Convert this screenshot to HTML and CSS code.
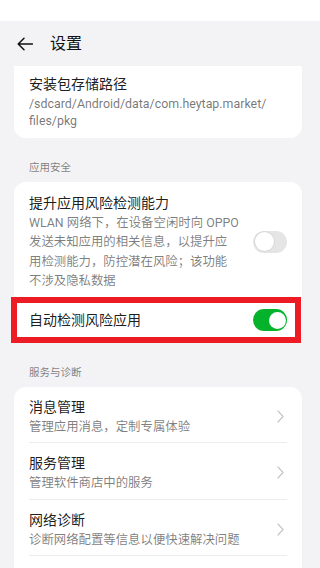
FILE: index.html
```html
<!DOCTYPE html>
<html lang="zh-CN">
<head>
<meta charset="utf-8">
<meta name="viewport" content="width=device-width, initial-scale=1">
<title>设置</title>
<link rel="stylesheet" href="styles.css">
</head>
<body>
<div class="statusbar"></div>
<header class="topbar">
  <svg class="back" width="16" height="14" viewBox="0 0 16 14" aria-hidden="true">
    <path d="M15.5 7H1.2M7 1.2L1.2 7 7 12.8" fill="none" stroke="#111" stroke-width="1.5" stroke-linecap="round" stroke-linejoin="round"/>
  </svg>
  <h1 class="title">设置</h1>
</header>

<main class="content">
  <section class="card card-top">
    <div class="row row-path">
      <div class="row-text">
        <div class="row-title">安装包存储路径</div>
        <div class="row-path-text">/sdcard/Android/data/com.heytap.market/<br>files/pkg</div>
      </div>
    </div>
  </section>

  <div class="section-label">应用安全</div>
  <section class="card">
    <div class="row row-risk">
      <div class="row-text">
        <div class="row-title">提升应用风险检测能力</div>
        <div class="row-desc">WLAN 网络下，在设备空闲时向 OPPO<br>发送未知应用的相关信息，以提升应<br>用检测能力，防控潜在风险；该功能<br>不涉及隐私数据</div>
      </div>
      <span class="switch"><span class="knob"></span></span>
    </div>
    <div class="row row-auto">
      <div class="row-title">自动检测风险应用</div>
      <span class="switch on"><span class="knob"></span></span>
      <span class="highlight"></span>
    </div>
  </section>

  <div class="section-label">服务与诊断</div>
  <section class="card card-list">
    <div class="item">
      <div class="row-text">
        <div class="row-title">消息管理</div>
        <div class="item-sub">管理应用消息，定制专属体验</div>
      </div>
      <svg class="chev" width="7" height="13" viewBox="0 0 7 13" aria-hidden="true"><path d="M1 1l5 5.5L1 12" fill="none" stroke="#c6c6c6" stroke-width="1.2" stroke-linecap="round" stroke-linejoin="round"/></svg>
    </div>
    <div class="item">
      <div class="row-text">
        <div class="row-title">服务管理</div>
        <div class="item-sub">管理软件商店中的服务</div>
      </div>
      <svg class="chev" width="7" height="13" viewBox="0 0 7 13" aria-hidden="true"><path d="M1 1l5 5.5L1 12" fill="none" stroke="#c6c6c6" stroke-width="1.2" stroke-linecap="round" stroke-linejoin="round"/></svg>
    </div>
    <div class="item">
      <div class="row-text">
        <div class="row-title">网络诊断</div>
        <div class="item-sub">诊断网络配置等信息以便快速解决问题</div>
      </div>
      <svg class="chev" width="7" height="13" viewBox="0 0 7 13" aria-hidden="true"><path d="M1 1l5 5.5L1 12" fill="none" stroke="#c6c6c6" stroke-width="1.2" stroke-linecap="round" stroke-linejoin="round"/></svg>
    </div>
  </section>
</main>
</body>
</html>
```

FILE: styles.css
```css
* { box-sizing: border-box; }

html, body {
  margin: 0;
  padding: 0;
}

body {
  background: #f3f3f5;
  font-family: "Roboto", "Noto Sans CJK SC", sans-serif;
  color: rgba(0, 0, 0, 0.9);
  width: 320px;
  height: 568px;
  overflow: hidden;
}

.statusbar {
  height: 21px;
  background: #ffffff;
}

.topbar {
  height: 45px;
  display: flex;
  align-items: center;
  padding-left: 17px;
  gap: 17px;
}

.back { display: block; flex: none; }

.title {
  margin: 0;
  font-size: 16px;
  font-weight: 400;
  line-height: 22px;
  color: #111;
}

.content {
  padding: 0 18px 0 14px;
}

.card {
  background: #ffffff;
  border-radius: 12px;
  padding: 0 15px;
}

.card-top {
  border-radius: 0 0 12px 12px;
  padding-top: 8px;
  padding-bottom: 9px;
}

.row-title {
  font-size: 14px;
  line-height: 20px;
  color: rgba(0, 0, 0, 0.9);
}

.row-path-text {
  margin-top: 2px;
  font-size: 12.4px;
  line-height: 16.5px;
  color: rgba(0, 0, 0, 0.55);
}

.section-label {
  padding: 21.5px 0 6px 15px;
  font-size: 10.5px;
  line-height: 16px;
  color: rgba(0, 0, 0, 0.5);
}

.row {
  display: flex;
  align-items: center;
  justify-content: space-between;
}

.row-risk {
  padding: 11px 0 6.6px;
}

.row-desc {
  font-size: 12.4px;
  line-height: 19.6px;
  color: rgba(0, 0, 0, 0.52);
  white-space: nowrap;
}

.row-auto {
  position: relative;
  height: 46px;
}

.highlight {
  position: absolute;
  top: 0;
  bottom: 0;
  left: -18px;
  right: -14px;
  border: 6px solid #ed1c24;
  pointer-events: none;
}

.switch {
  flex: none;
  position: relative;
  width: 34px;
  height: 22px;
  border-radius: 11px;
  background: #e5e5e5;
}

.switch .knob {
  position: absolute;
  top: 1.5px;
  left: 1.5px;
  width: 19px;
  height: 19px;
  border-radius: 50%;
  background: #ffffff;
  box-shadow: 0 0 0 0.8px #d4d4d4;
}

.switch.on {
  background: #04b32b;
}

.switch.on .knob {
  top: 2.5px;
  left: auto;
  right: 1.5px;
  width: 17px;
  height: 17px;
  box-shadow: none;
}

.card-list {
  padding-bottom: 20px;
  border-radius: 12px 12px 0 0;
}

.item {
  display: flex;
  align-items: center;
  justify-content: space-between;
  padding: 10px 3px 6.5px 0;
  border-bottom: 1px solid #ececec;
}

.item-sub {
  font-size: 12.4px;
  line-height: 19px;
  color: rgba(0, 0, 0, 0.52);
}

.chev { display: block; flex: none; }
```
